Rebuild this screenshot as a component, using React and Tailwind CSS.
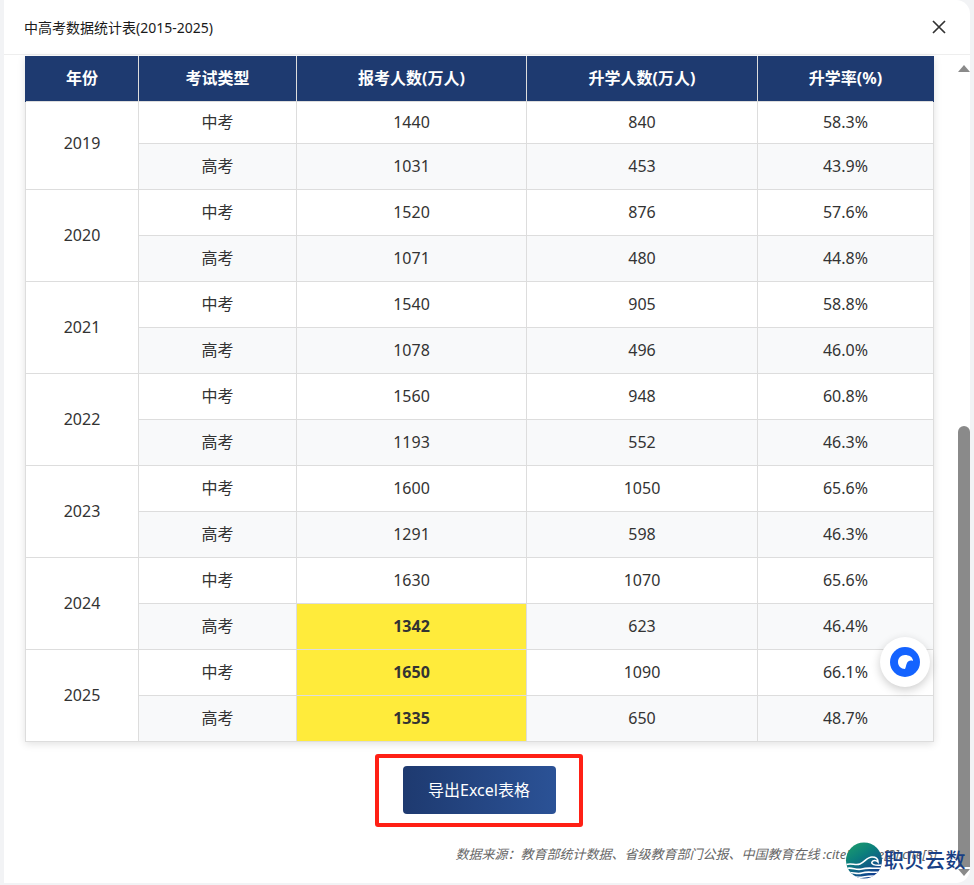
import React from "react";

const rows = [
  ["2019", "1440", "840", "58.3%", "1031", "453", "43.9%"],
  ["2020", "1520", "876", "57.6%", "1071", "480", "44.8%"],
  ["2021", "1540", "905", "58.8%", "1078", "496", "46.0%"],
  ["2022", "1560", "948", "60.8%", "1193", "552", "46.3%"],
  ["2023", "1600", "1050", "65.6%", "1291", "598", "46.3%"],
  ["2024", "1630", "1070", "65.6%", "1342", "623", "46.4%"],
  ["2025", "1650", "1090", "66.1%", "1335", "650", "48.7%"],
];
const hot = new Set(["1342", "1650", "1335"]);
const cell = "border border-[#dddddd] text-center align-middle p-0";

function Num({ v }) {
  return hot.has(v) ? (
    <td className={`${cell} bg-[#ffeb3b] font-bold text-[#333333]`}>{v}</td>
  ) : (
    <td className={cell}>{v}</td>
  );
}

function Logo() {
  return (
    <svg width="40" height="38" viewBox="0 0 40 38" className="shrink-0">
      <defs>
        <linearGradient id="lg" x1="0" y1="0" x2="0.6" y2="1">
          <stop offset="0" stopColor="#1fa06a" />
          <stop offset="0.45" stopColor="#0b7f7c" />
          <stop offset="1" stopColor="#123f8f" />
        </linearGradient>
        <clipPath id="lc">
          <circle cx="19" cy="18.5" r="18" />
        </clipPath>
      </defs>
      <circle cx="19" cy="18.5" r="18" fill="url(#lg)" />
      <g clipPath="url(#lc)" fill="none" stroke="#ffffff" strokeWidth="1.6">
        <path d="M0 23c6-3 10 1 15-1s7-7 12-7c4 0 6 2 6 5-2-2-5-2-6 0s2 4 10 3" />
        <path d="M0 27c6-3 11 2 17 0s12 0 20-1" />
        <path d="M1 31c6-2 10 2 16 0s10 0 18-1" />
        <path d="M5 35c4-1 8 1 13 0s8-1 12-1" />
      </g>
    </svg>
  );
}

export default function App() {
  return (
    <div
      className="w-[974px] h-[885px] bg-[#f2f3f5] overflow-hidden relative text-[16px] text-[#333333]"
      style={{ fontFamily: '"Noto Sans", "Noto Sans CJK SC", sans-serif' }}
    >
      <div className="ml-[4px] w-[966px] h-[883px] bg-white rounded-r-[14px] flex flex-col overflow-hidden">
        <header className="h-[55px] shrink-0 border-b border-[#eeeeee] flex items-center justify-between pl-[20px] pr-[23px]">
          <span className="text-[14px] text-[#1a1a1a]">中高考数据统计表(2015-2025)</span>
          <svg width="14" height="14" viewBox="0 0 14 14" fill="none" stroke="#333333" strokeWidth="1.7" className="mr-[1px]">
            <path d="M1 1l12 12M13 1L1 13" />
          </svg>
        </header>
        <div className="flex flex-1 min-h-0 pt-px">
          <main className="w-[953px] shrink-0 pl-[21px] flex flex-col">
            <table className="w-[908px] table-fixed border-collapse bg-white shadow-[0_2px_8px_rgba(0,0,0,0.12)]">
              <colgroup>
                <col className="w-[113px]" />
                <col className="w-[158px]" />
                <col className="w-[230px]" />
                <col className="w-[231px]" />
                <col className="w-[176px]" />
              </colgroup>
              <thead>
                <tr className="h-[45px] bg-[#1e3a70] text-white font-bold">
                  {["年份", "考试类型", "报考人数(万人)", "升学人数(万人)", "升学率(%)"].map((h) => (
                    <th key={h} className="border-x border-[#dddddd] first:border-l-[#1e3a70] last:border-r-[#1e3a70] text-center p-0">
                      {h}
                    </th>
                  ))}
                </tr>
              </thead>
              <tbody>
                {rows.map((r, i) => (
                  <React.Fragment key={r[0]}>
                    <tr className={i === 0 ? "h-[42px]" : "h-[46px]"}>
                      <td rowSpan={2} className={cell}>
                        <span className={i === 0 ? "relative -top-[2px]" : ""}>{r[0]}</span>
                      </td>
                      <td className={cell}>中考</td>
                      <Num v={r[1]} />
                      <Num v={r[2]} />
                      <Num v={r[3]} />
                    </tr>
                    <tr className="h-[46px] bg-[#f8f9fa]">
                      <td className={cell}>高考</td>
                      <Num v={r[4]} />
                      <Num v={r[5]} />
                      <Num v={r[6]} />
                    </tr>
                  </React.Fragment>
                ))}
              </tbody>
            </table>
            <div className="w-[908px] flex justify-center mt-[12px]">
              <div className="w-[208px] h-[73px] border-[4px] border-[#ff2015] rounded-[3px] flex items-center justify-center">
                <button className="w-[153px] h-[48px] rounded-[4px] bg-gradient-to-r from-[#1e3a70] to-[#2b5296] text-white text-[16px]">
                  导出Excel表格
                </button>
              </div>
            </div>
            <p className="w-[912px] text-right italic text-[13px] text-[#666666] mt-[18px] leading-[18px]">
              数据来源：教育部统计数据、省级教育部门公报、中国教育在线 :cite[1]:cite[2]:cite[3]
            </p>
          </main>
          <aside className="w-[13px] shrink-0 flex flex-col items-center relative">
            <div className="mt-[9px] w-0 h-0 border-x-[6px] border-x-transparent border-b-[7px] border-b-[#8a8a8a]" />
            <div className="mt-[354px] w-[12px] h-[441px] bg-[#8a8a8a] rounded-t-[6px]" />
            <div className="mt-[2px] w-0 h-0 border-x-[6px] border-x-transparent border-t-[7px] border-t-[#8a8a8a]" />
          </aside>
        </div>
      </div>
      <div className="absolute left-[880px] top-[637px] w-[50px] h-[50px] rounded-full bg-white shadow-[0_3px_10px_rgba(0,0,0,0.2)] flex items-center justify-center">
        <svg width="30" height="30" viewBox="0 0 30 30">
          <circle cx="15" cy="15" r="15" fill="#1463ff" />
          <path d="M8 15c0-4 3-7 7-7s8 2 8 6c-3-1-5 0-6 2s-1 4-2 6c-4 0-7-3-7-7z" fill="#ffffff" />
        </svg>
      </div>
      <div className="absolute left-[845px] top-[842px] flex items-center">
        <Logo />
        <span className="-ml-[1px] text-[20px] leading-none text-[#183f85] font-medium tracking-[0.5px]">职贝云数</span>
      </div>
    </div>
  );
}
